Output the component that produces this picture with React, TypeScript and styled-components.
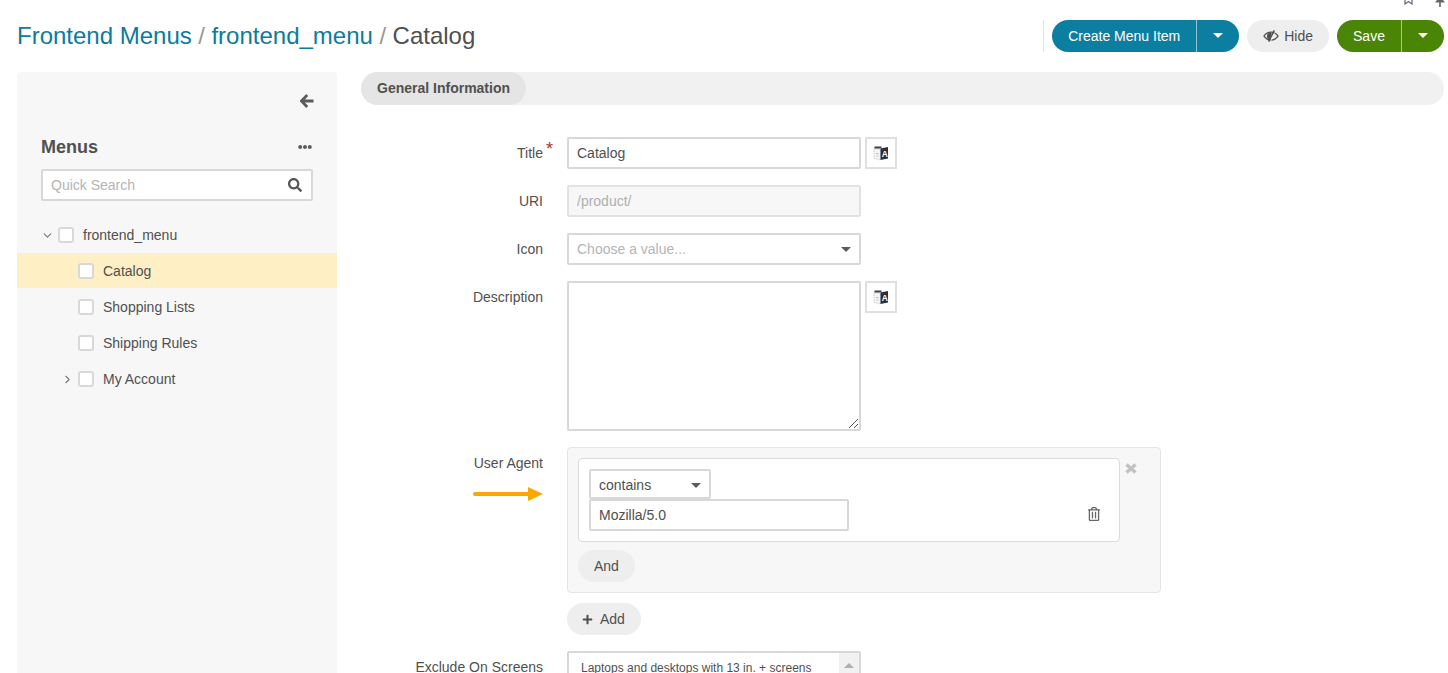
import * as React from 'react';
import styled, { createGlobalStyle } from 'styled-components';
import { ChevronDown, ChevronRight } from 'lucide-react';
import { FaEllipsisH, FaPlus, FaRegTrashAlt, FaSearch } from 'react-icons/fa';

const GlobalStyle = createGlobalStyle`
  html, body {
    margin: 0;
    height: 100%;
    overflow: hidden;
    background: #fff;
    font-family: "Liberation Sans", Arial, sans-serif;
    font-size: 14px;
    color: #505050;
  }
  * { box-sizing: border-box; }
`;

const Page = styled.div`
  position: relative;
  width: 1448px;
  height: 673px;
  overflow: hidden;
  padding: 0 4px 0 17px;
`;

const TopIcons = styled.div`
  position: absolute;
  top: -8px;
  left: 1404px;
  display: flex;
  gap: 22px;
`;

const Header = styled.header`
  display: flex;
  align-items: center;
  justify-content: space-between;
  height: 72px;
  padding-bottom: 1px;
`;

const Breadcrumbs = styled.h1`
  margin: 0;
  font-size: 24px;
  font-weight: 400;
  line-height: 30px;
  color: #505050;
`;

const Crumb = styled.a`
  color: #0c7b9c;
`;

const Slash = styled.span`
  color: #999;
  margin: 0 6.5px;
`;

const Actions = styled.div`
  display: flex;
  align-items: center;
  gap: 8px;
  border-left: 1px solid #e3e3e3;
  padding-left: 8px;
  height: 32px;
`;

const SplitButton = styled.div<{ $bg: string }>`
  display: flex;
  height: 32px;
  border-radius: 16px;
  background: ${(p) => p.$bg};
  color: #fff;
  overflow: hidden;
`;

const SplitMain = styled.span<{ $width: number }>`
  display: flex;
  align-items: center;
  justify-content: center;
  width: ${(p) => p.$width}px;
  border-right: 1px solid rgba(255, 255, 255, 0.55);
`;

const SplitCaret = styled.span`
  display: flex;
  align-items: center;
  justify-content: center;
  width: 42px;
`;

const Caret = styled.i<{ $color?: string; $size?: number }>`
  display: block;
  width: 0;
  height: 0;
  border-left: ${(p) => p.$size ?? 5}px solid transparent;
  border-right: ${(p) => p.$size ?? 5}px solid transparent;
  border-top: ${(p) => p.$size ?? 5}px solid ${(p) => p.$color ?? '#fff'};
`;

const GhostButton = styled.span`
  display: inline-flex;
  align-items: center;
  gap: 5px;
  height: 32px;
  padding: 0 16px;
  border-radius: 16px;
  background: #eeeeee;
  color: #505050;
`;

const Body = styled.div`
  display: flex;
  gap: 24px;
  align-items: flex-start;
`;

const Sidebar = styled.aside`
  flex: 0 0 320px;
  height: 620px;
  background: #f7f7f7;
  border-radius: 4px 4px 0 0;
  padding-top: 22px;
`;

const CollapseRow = styled.div`
  display: flex;
  justify-content: flex-end;
  padding-right: 23px;
  height: 14px;
`;

const SidebarTitleRow = styled.div`
  display: flex;
  align-items: center;
  justify-content: space-between;
  margin-top: 27px;
  padding: 0 25px 0 24px;
  height: 24px;
`;

const SidebarTitle = styled.h2`
  margin: 0;
  font-size: 18px;
  line-height: 24px;
  font-weight: 700;
  color: #505050;
`;

const SearchBox = styled.div`
  display: flex;
  align-items: center;
  justify-content: space-between;
  margin: 10px 24px 0;
  height: 32px;
  padding: 0 9px 0 8px;
  background: #fff;
  border: 2px solid #d8d8d8;
  border-radius: 2px;
  color: #505050;
`;

const Placeholder = styled.span`
  color: #b5b5b5;
`;

const Tree = styled.div`
  margin-top: 16px;
`;

const TreeRow = styled.div<{ $depth: number; $selected?: boolean }>`
  display: flex;
  align-items: center;
  height: ${(p) => (p.$selected ? 35 : 36)}px;
  margin-bottom: ${(p) => (p.$selected ? 1 : 0)}px;
  padding-left: ${(p) => 22 + p.$depth * 20}px;
  background: ${(p) => (p.$selected ? '#feefc4' : 'transparent')};
`;

const Toggle = styled.span`
  display: flex;
  align-items: center;
  justify-content: center;
  width: 17px;
  margin-right: -1px;
  color: #777;
`;

const Check = styled.span`
  flex: none;
  width: 16px;
  height: 16px;
  margin: 0 9px 0 3px;
  background: #fff;
  border: 2px solid #d8d8d8;
  border-radius: 3px;
`;

const Main = styled.main`
  flex: 1;
  min-width: 0;
`;

const TabBar = styled.div`
  height: 33px;
  background: #f1f1f1;
  border-radius: 17px;
`;

const Tab = styled.span`
  display: inline-flex;
  align-items: center;
  height: 33px;
  padding: 0 16px 2px;
  background: #e5e5e5;
  border-radius: 17px;
  font-weight: 700;
  color: #505050;
`;

const Form = styled.div`
  padding-top: 32px;
`;

const Row = styled.div<{ $gap?: number }>`
  display: grid;
  grid-template-columns: 182px 1fr;
  column-gap: 24px;
  margin-bottom: ${(p) => p.$gap ?? 16}px;
`;

const LabelCell = styled.div`
  display: flex;
  flex-direction: column;
  align-items: flex-end;
`;

const Label = styled.label`
  position: relative;
  display: block;
  line-height: 32px;
  color: #505050;
`;

const Required = styled.span`
  position: absolute;
  left: 100%;
  top: 3px;
  margin-left: 3px;
  font-size: 18px;
  line-height: 18px;
  color: #a5342a;
`;

const Field = styled.div`
  display: flex;
  align-items: flex-start;
  gap: 4px;
`;

const Input = styled.div<{ $disabled?: boolean; $width?: number }>`
  display: flex;
  align-items: center;
  justify-content: space-between;
  width: ${(p) => p.$width ?? 294}px;
  height: 32px;
  padding: 0 8px;
  border: 2px solid ${(p) => (p.$disabled ? '#e2e2e2' : '#d8d8d8')};
  border-radius: 2px;
  background: ${(p) => (p.$disabled ? '#f7f7f7' : '#fff')};
  color: ${(p) => (p.$disabled ? '#b0b0b0' : '#505050')};
`;

const ConditionSelect = styled(Input)`
  height: 30px;
  padding-top: 2px;
`;

const TextArea = styled.div`
  position: relative;
  width: 294px;
  height: 150px;
  border: 2px solid #d8d8d8;
  border-radius: 2px;
  background: #fff;
`;

const ResizeGrip = styled.svg`
  position: absolute;
  right: 0;
  bottom: 0;
`;

const TranslateButton = styled.span`
  display: flex;
  align-items: center;
  justify-content: center;
  width: 32px;
  height: 32px;
  border: 2px solid #e0e0e0;
  background: #fff;
`;

const Panel = styled.div`
  position: relative;
  width: 594px;
  height: 146px;
  padding: 10px;
  background: #f7f7f7;
  border: 1px solid #e5e5e5;
  border-radius: 4px;
`;

const Condition = styled.div`
  position: relative;
  width: 542px;
  height: 84px;
  padding: 10px;
  background: #fff;
  border: 1px solid #dcdcdc;
  border-radius: 4px;
`;

const RemoveButton = styled.span`
  position: absolute;
  top: 15px;
  right: 23px;
  display: block;
  line-height: 0;
`;

const TrashButton = styled.span`
  position: absolute;
  right: 18px;
  top: 48px;
  color: #666;
  font-size: 14px;
  line-height: 14px;
`;

const PillButton = styled.span`
  display: inline-flex;
  align-items: center;
  gap: 7px;
  height: 32px;
  padding: 0 16px 0 15px;
  border-radius: 16px;
  background: #eeeeee;
  color: #505050;
`;

const AndButton = styled(PillButton)`
  margin-top: 8px;
  padding: 0 16px;
`;

const Arrow = styled.svg`
  display: block;
  margin-top: 8px;
`;

const AddRow = styled.div`
  margin-top: 10px;
`;

const ListBox = styled.div`
  display: flex;
  width: 294px;
  height: 120px;
  border: 2px solid #d8d8d8;
  border-radius: 2px;
  background: #fff;
  font-size: 12px;
`;

const ListOptions = styled.div`
  flex: 1;
  padding: 8px 12px;
  line-height: 14px;
  color: #505050;
`;

const ListScroll = styled.div`
  flex: 0 0 20px;
  display: flex;
  justify-content: center;
  padding-top: 10px;
  background: #f1f1f1;
`;

const UpCaret = styled.i`
  display: block;
  width: 0;
  height: 0;
  border-left: 5px solid transparent;
  border-right: 5px solid transparent;
  border-bottom: 5px solid #b0b0b0;
`;

const TranslateIcon = () => (
  <svg width="16" height="17" viewBox="0 0 16 17">
    <path d="M1 3.5l6.5 1V15l-6.5-1.5z" fill="#f4f4f4" stroke="#c4c4c4" strokeWidth="0.8" strokeDasharray="1.5 1" />
    <path d="M3 8.5h2.5M3.5 11h2" stroke="#bcbcbc" strokeWidth="0.9" />
    <path d="M1.5 1.5h7v2h-7z" fill="#3a3f46" />
    <path d="M7.5 3.5L15 2v11.5l-7.5 1.5z" fill="#2b3038" />
    <text x="8.7" y="12" fontSize="8.5" fontWeight="700" fontFamily="Liberation Sans" fill="#fff">A</text>
  </svg>
);

const EyeSlashIcon = () => (
  <svg width="16" height="14" viewBox="0 0 17 14">
    <path d="M1 7.2C3 4.4 5.6 3 8.5 3s5.5 1.4 7.5 4.2C14 10 11.4 11.4 8.5 11.4S3 10 1 7.2z" fill="none" stroke="#4f4f4f" strokeWidth="1.3" />
    <path d="M4.2 7.2C4.2 5 6 3.4 8 3.4l1.2 1-2 5.8-1 .8c-1.2-.8-2-2.2-2-3.8z" fill="#4f4f4f" />
    <path d="M12 1L6 13" stroke="#4f4f4f" strokeWidth="1.5" />
    <path d="M12.4 1.4L6.6 13" stroke="#eeeeee" strokeWidth="0.8" transform="translate(1.3 0.3)" />
  </svg>
);

const BackArrowIcon = () => (
  <svg width="14" height="14" viewBox="0 0 14 14">
    <path d="M7.2 1L1.5 7l5.7 6M2 7h11.5" fill="none" stroke="#5c5c5c" strokeWidth="2.8" />
  </svg>
);

const RemoveIcon = () => (
  <svg width="12" height="11" viewBox="0 0 12 11">
    <path d="M1.5 1.5l9 8M10.5 1.5l-9 8" fill="none" stroke="#c2c2c2" strokeWidth="3.4" />
  </svg>
);

export default function App() {
  return (
    <Page>
      <GlobalStyle />
      <TopIcons>
        <svg width="9" height="13" viewBox="0 0 9 13">
          <path d="M1 1h7v11L4.5 9.5 1 12z" fill="none" stroke="#6a7080" strokeWidth="1.3" />
        </svg>
        <svg width="10" height="15" viewBox="0 0 10 15">
          <path d="M2 0h6v8l2 2.5H0L2 8z" fill="#666" />
          <path d="M4.2 10h1.6v5H4.2z" fill="#666" />
        </svg>
      </TopIcons>

      <Header>
        <Breadcrumbs>
          <Crumb>Frontend Menus</Crumb>
          <Slash>/</Slash>
          <Crumb>frontend_menu</Crumb>
          <Slash>/</Slash>
          Catalog
        </Breadcrumbs>
        <Actions>
          <SplitButton $bg="#0c7fa0">
            <SplitMain $width={145}>Create Menu Item</SplitMain>
            <SplitCaret><Caret /></SplitCaret>
          </SplitButton>
          <GhostButton>
            <EyeSlashIcon />
            Hide
          </GhostButton>
          <SplitButton $bg="#4a8505">
            <SplitMain $width={65}>Save</SplitMain>
            <SplitCaret><Caret /></SplitCaret>
          </SplitButton>
        </Actions>
      </Header>

      <Body>
        <Sidebar>
          <CollapseRow><BackArrowIcon /></CollapseRow>
          <SidebarTitleRow>
            <SidebarTitle>Menus</SidebarTitle>
            <FaEllipsisH size={14} color="#5c5c5c" />
          </SidebarTitleRow>
          <SearchBox>
            <Placeholder>Quick Search</Placeholder>
            <FaSearch size={14} color="#555" />
          </SearchBox>
          <Tree>
            <TreeRow $depth={0}>
              <Toggle><ChevronDown size={13} /></Toggle>
              <Check />
              frontend_menu
            </TreeRow>
            <TreeRow $depth={1} $selected>
              <Toggle />
              <Check />
              Catalog
            </TreeRow>
            <TreeRow $depth={1}>
              <Toggle />
              <Check />
              Shopping Lists
            </TreeRow>
            <TreeRow $depth={1}>
              <Toggle />
              <Check />
              Shipping Rules
            </TreeRow>
            <TreeRow $depth={1}>
              <Toggle><ChevronRight size={13} /></Toggle>
              <Check />
              My Account
            </TreeRow>
          </Tree>
        </Sidebar>

        <Main>
          <TabBar><Tab>General Information</Tab></TabBar>
          <Form>
            <Row>
              <LabelCell>
                <Label>
                  Title
                  <Required>*</Required>
                </Label>
              </LabelCell>
              <Field>
                <Input>Catalog</Input>
                <TranslateButton><TranslateIcon /></TranslateButton>
              </Field>
            </Row>
            <Row>
              <LabelCell><Label>URI</Label></LabelCell>
              <Field><Input $disabled>/product/</Input></Field>
            </Row>
            <Row>
              <LabelCell><Label>Icon</Label></LabelCell>
              <Field>
                <Input>
                  <Placeholder>Choose a value...</Placeholder>
                  <Caret $color="#5c5c5c" />
                </Input>
              </Field>
            </Row>
            <Row>
              <LabelCell><Label>Description</Label></LabelCell>
              <Field>
                <TextArea>
                  <ResizeGrip width="12" height="12" viewBox="0 0 12 12">
                    <path d="M11 2L2 11M11 7l-4 4" stroke="#555" strokeWidth="1" fill="none" />
                  </ResizeGrip>
                </TextArea>
                <TranslateButton><TranslateIcon /></TranslateButton>
              </Field>
            </Row>
            <Row>
              <LabelCell>
                <Label>User Agent</Label>
                <Arrow width="70" height="14" viewBox="0 0 70 14">
                  <path d="M2 7H56" stroke="#f9a800" strokeWidth="4" strokeLinecap="round" />
                  <path d="M55 0l15 7-15 7z" fill="#f9a800" />
                </Arrow>
              </LabelCell>
              <div>
                <Panel>
                  <Condition>
                    <ConditionSelect $width={122}>
                      contains
                      <Caret $color="#5c5c5c" />
                    </ConditionSelect>
                    <Input $width={260}>Mozilla/5.0</Input>
                    <TrashButton><FaRegTrashAlt /></TrashButton>
                  </Condition>
                  <AndButton>And</AndButton>
                  <RemoveButton><RemoveIcon /></RemoveButton>
                </Panel>
                <AddRow>
                  <PillButton>
                    <FaPlus size={11} />
                    Add
                  </PillButton>
                </AddRow>
              </div>
            </Row>
            <Row>
              <LabelCell><Label>Exclude On Screens</Label></LabelCell>
              <Field>
                <ListBox>
                  <ListOptions>Laptops and desktops with 13 in. + screens</ListOptions>
                  <ListScroll><UpCaret /></ListScroll>
                </ListBox>
              </Field>
            </Row>
          </Form>
        </Main>
      </Body>
    </Page>
  );
}
